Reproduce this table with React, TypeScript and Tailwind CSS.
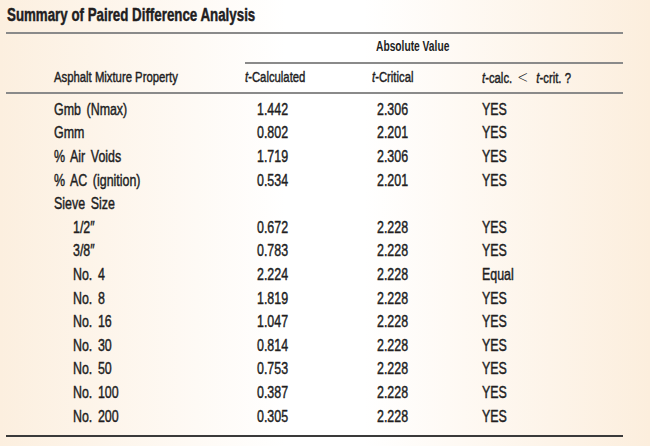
import React from "react";

type Row = { p: string; c: string; k: string; r: string; indent?: boolean };

const rows: Row[] = [
  { p: "Gmb (Nmax)", c: "1.442", k: "2.306", r: "YES" },
  { p: "Gmm", c: "0.802", k: "2.201", r: "YES" },
  { p: "% Air Voids", c: "1.719", k: "2.306", r: "YES" },
  { p: "% AC (ignition)", c: "0.534", k: "2.201", r: "YES" },
  { p: "Sieve Size", c: "", k: "", r: "" },
  { p: "1/2\u2033", c: "0.672", k: "2.228", r: "YES", indent: true },
  { p: "3/8\u2033", c: "0.783", k: "2.228", r: "YES", indent: true },
  { p: "No. 4", c: "2.224", k: "2.228", r: "Equal", indent: true },
  { p: "No. 8", c: "1.819", k: "2.228", r: "YES", indent: true },
  { p: "No. 16", c: "1.047", k: "2.228", r: "YES", indent: true },
  { p: "No. 30", c: "0.814", k: "2.228", r: "YES", indent: true },
  { p: "No. 50", c: "0.753", k: "2.228", r: "YES", indent: true },
  { p: "No. 100", c: "0.387", k: "2.228", r: "YES", indent: true },
  { p: "No. 200", c: "0.305", k: "2.228", r: "YES", indent: true },
];

function N({ children }: { children: React.ReactNode }) {
  return (
    <span className="inline-block origin-left scale-x-[0.73] whitespace-nowrap">{children}</span>
  );
}

export default function App() {
  return (
    <div className="w-[650px] h-[446px] overflow-hidden bg-[linear-gradient(to_right,#fcefdf_0%,#ffffff_44%,#ffffff_56%,#fceedd_100%)] font-['Liberation_Sans',Arial,sans-serif] text-[#221e1f] [-webkit-text-stroke:0.45px_#221e1f]">
      <div className="ml-[6px] w-[617px]">
        <div className="h-[32px] pl-[1px] pt-[5px] text-[18px] leading-[21px] font-bold">
          <span className="inline-block origin-left scale-x-[0.74] whitespace-nowrap">
            Summary of Paired Difference Analysis
          </span>
        </div>
        <div className="h-[2px] bg-[#8a8a8a]" />
        <div className="grid grid-cols-[239px_110px_127px_141px] h-[28px] text-[15.5px] leading-[18px]">
          <div className="col-start-3 col-span-2 flex items-center pl-[21px] pb-[5px] font-bold [-webkit-text-stroke:0px]">
            <span className="inline-block origin-left scale-x-[0.66] whitespace-nowrap">Absolute Value</span>
          </div>
        </div>
        <div className="ml-[239px] h-[2px] bg-[#8a8a8a]" />
        <div className="grid grid-cols-[239px_110px_127px_141px] h-[28px] text-[15.5px] leading-[18px]">
          <div className="flex items-center pl-[48px] pb-[2px]">
            <N>Asphalt Mixture Property</N>
          </div>
          <div className="flex items-center pb-[2px]">
            <N>
              <i>t</i>-Calculated
            </N>
          </div>
          <div className="flex items-center pl-[17px] pb-[2px]">
            <N>
              <i>t</i>-Critical
            </N>
          </div>
          <div className="flex items-center pb-[2px]">
            <N>
              <i>t</i>-calc.
              <span className="ml-[7px] mr-[11px] text-[18px] leading-[18px] font-['DejaVu_Sans',sans-serif] font-light [-webkit-text-stroke:0px]">&lt;</span>
              <i>t</i>-crit. ?
            </N>
          </div>
        </div>
        <div className="h-[2px] bg-[#8a8a8a]" />
        <div className="pt-[4px]">
          {rows.map((r, i) => (
            <div
              key={i}
              className="grid grid-cols-[239px_110px_127px_141px] h-[23.6px] items-center text-[17px] leading-[20px]"
            >
              <div className={(r.indent ? "pl-[67px]" : "pl-[48px]") + " [word-spacing:3px]"}>
                <N>{r.p}</N>
              </div>
              <div className="pl-[12px]">
                <N>{r.c}</N>
              </div>
              <div className="pl-[22px]">
                <N>{r.k}</N>
              </div>
              <div>
                <N>{r.r}</N>
              </div>
            </div>
          ))}
        </div>
        <div className="mt-[7px] h-[2px] bg-[#3a3a3a]" />
      </div>
    </div>
  );
}
